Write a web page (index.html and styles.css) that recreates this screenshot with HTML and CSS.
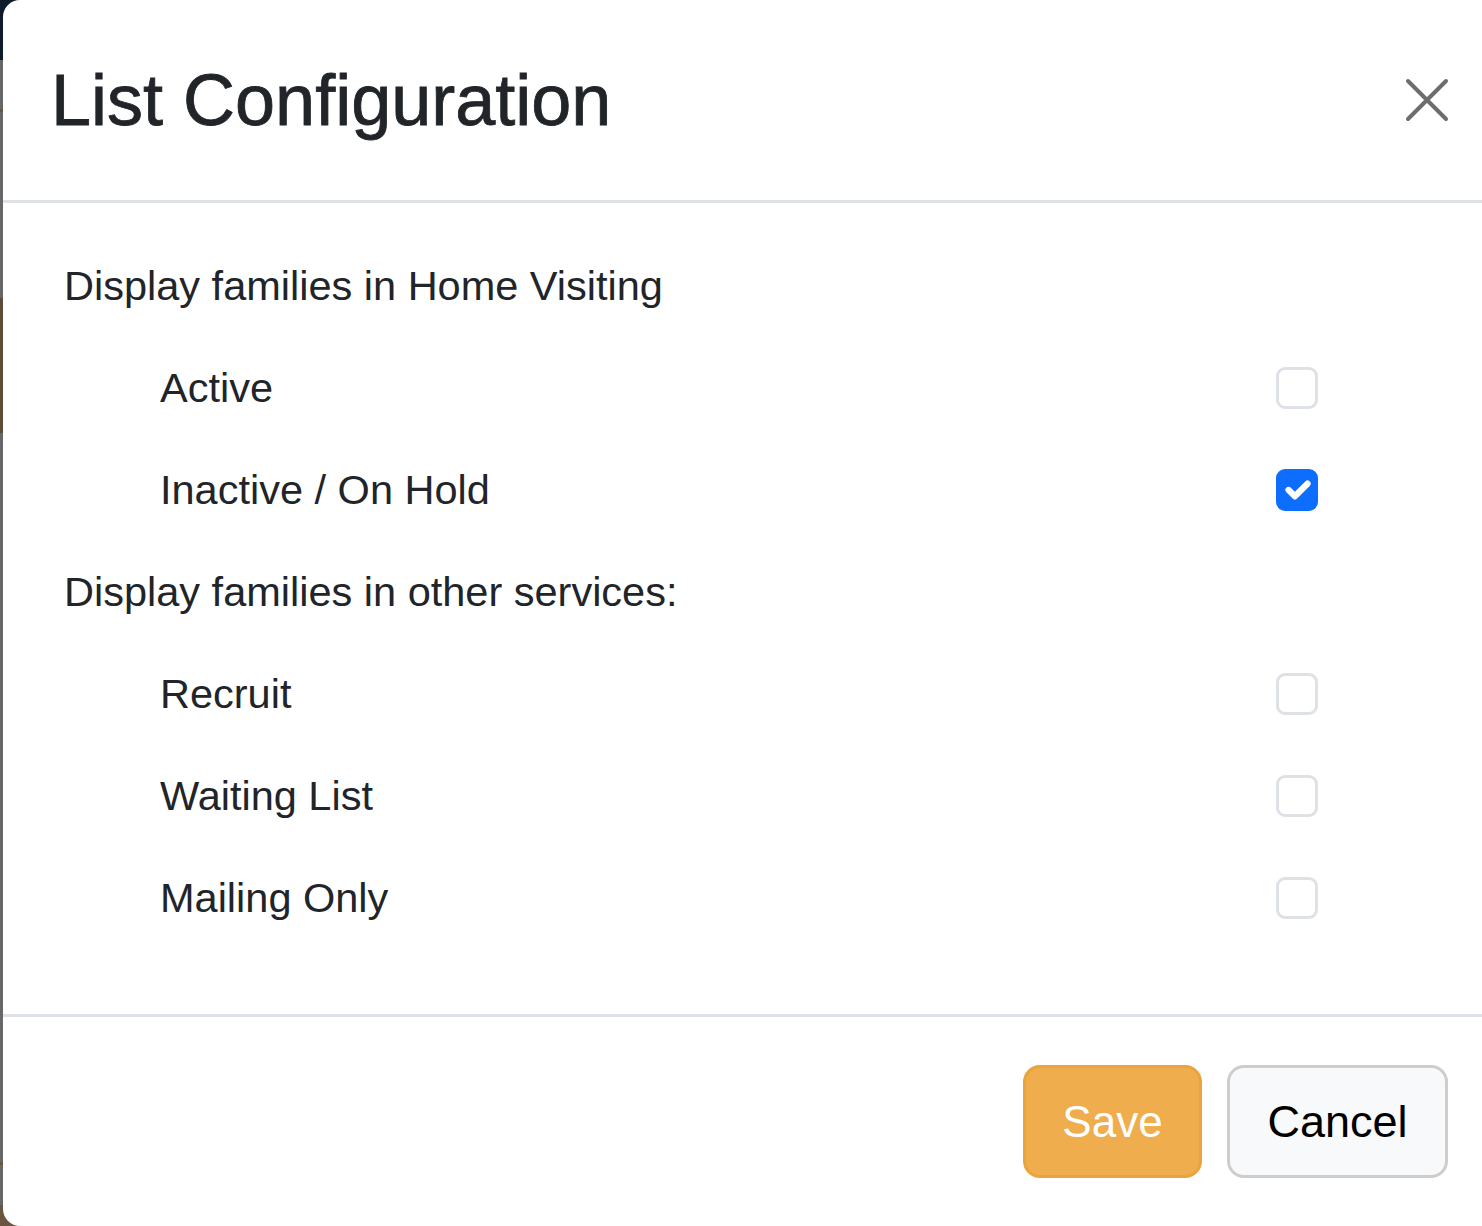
FILE: index.html
```html
<!DOCTYPE html>
<html lang="en">
<head>
<meta charset="utf-8">
<title>List Configuration</title>
<link rel="stylesheet" href="styles.css">
</head>
<body>
<div class="backdrop">
  <div class="modal">
    <div class="modal-header">
      <h1 class="modal-title">List Configuration</h1>
      <button class="close-btn" aria-label="Close">
        <svg width="44" height="44" viewBox="0 0 44 44"><path d="M3 3 L41 41 M41 3 L3 41" stroke="#6d6d6d" stroke-width="4" stroke-linecap="round" fill="none"/></svg>
      </button>
    </div>
    <div class="modal-body">
      <div class="row heading">Display families in Home Visiting</div>
      <div class="row option"><span class="label">Active</span><span class="check"></span></div>
      <div class="row option"><span class="label">Inactive / On Hold</span><span class="check checked"><svg width="42" height="42" viewBox="0 0 20 20"><path d="M6 10l3 3l6-6" stroke="#fff" stroke-width="3" stroke-linecap="round" stroke-linejoin="round" fill="none"/></svg></span></div>
      <div class="row heading">Display families in other services:</div>
      <div class="row option"><span class="label">Recruit</span><span class="check"></span></div>
      <div class="row option"><span class="label">Waiting List</span><span class="check"></span></div>
      <div class="row option"><span class="label">Mailing Only</span><span class="check"></span></div>
    </div>
    <div class="modal-footer">
      <button class="btn btn-save">Save</button>
      <button class="btn btn-cancel">Cancel</button>
    </div>
  </div>
</div>
</body>
</html>
```

FILE: styles.css
```css
html, body {
  margin: 0;
  padding: 0;
  overflow: hidden;
}
body {
  width: 1482px;
  height: 1226px;
  font-family: "Liberation Sans", Arial, sans-serif;
  color: #212529;
}
.backdrop {
  height: 1226px;
  display: flex;
  background: linear-gradient(to bottom,
    #0d1b2b 0, #0d1b2b 60px,
    #676767 60px, #676767 109px,
    #6a5541 109px, #6a5541 112px,
    #676767 112px, #676767 298px,
    #5d4b38 298px, #5d4b38 433px,
    #676767 433px, #676767 1162px,
    #6a5541 1162px, #6a5541 1165px,
    #676767 1165px, #676767 1205px,
    #6a5541 1205px, #6a5541 1226px);
}
.modal {
  margin-left: 3px;
  flex: 1;
  height: 1226px;
  background: #fff;
  border-radius: 17px 0 0 17px;
  display: flex;
  flex-direction: column;
}
.modal-header {
  height: 200px;
  border-bottom: 3px solid #dee2e6;
  display: flex;
  align-items: center;
  padding: 0 33px 0 48px;
}
.modal-title {
  margin: 0;
  font-size: 72px;
  font-weight: 500;
  line-height: 1.2;
  color: #212529;
  -webkit-text-stroke: 0.8px #212529;
}
.close-btn {
  margin-left: auto;
  border: 0;
  background: transparent;
  padding: 0;
  width: 44px;
  height: 44px;
  display: flex;
}
.modal-body {
  padding: 32px 164px 65px 61px;
}
.row {
  height: 102px;
  display: flex;
  align-items: center;
  font-size: 41.5px;
}
.option {
  padding-left: 96px;
}
.check {
  margin-left: auto;
  width: 42px;
  height: 42px;
  box-sizing: border-box;
  border: 3px solid #dee2e6;
  border-radius: 9px;
  background: #fff;
  display: flex;
}
.check.checked {
  background: #0d6efd;
  border-color: #0d6efd;
}
.check.checked svg {
  margin: -3px;
}
.modal-footer {
  border-top: 3px solid #dee2e6;
  padding: 48px 34px 48px 0;
  display: flex;
  justify-content: flex-end;
  gap: 25px;
}
.btn {
  height: 113px;
  font-family: "Liberation Sans", Arial, sans-serif;
  font-size: 44px;
  border-radius: 17px;
  padding: 0;
  box-sizing: border-box;
}
.btn-save {
  width: 179px;
  background: #efad4e;
  border: 3px solid #eaa43d;
  color: #fff;
}
.btn-cancel {
  width: 221px;
  background: #f8f9fa;
  border: 3px solid #cdcdcd;
  color: #000;
  font-size: 45px;
}
```
